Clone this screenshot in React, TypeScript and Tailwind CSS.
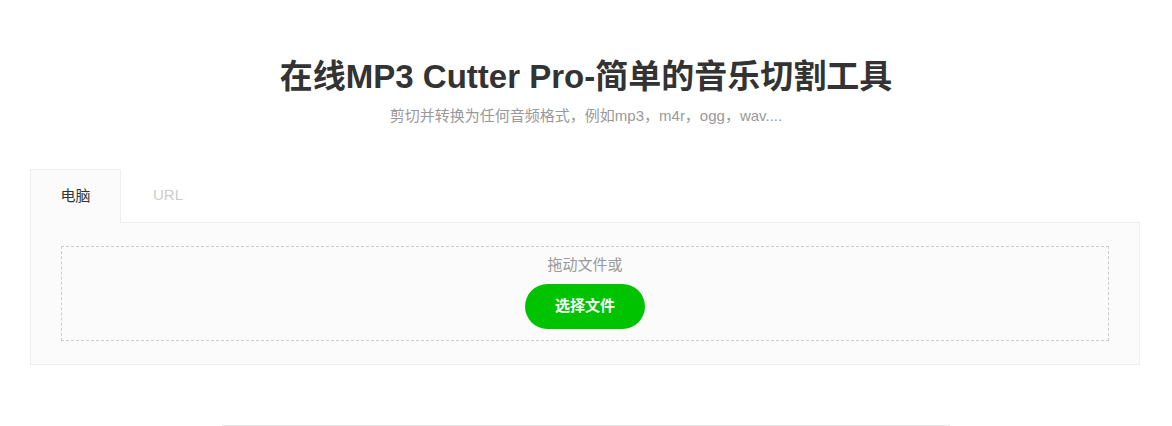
export default function App() {
  return (
    <div
      className="w-full h-[426px] overflow-hidden bg-white"
      style={{ fontFamily: '"Liberation Sans", "Noto Sans CJK SC", sans-serif' }}
    >
      {/* Header */}
      <div className="pt-[57px] text-center">
        <h1 className="text-[33px] leading-[40px] font-bold text-[#333]">
          在线MP3 Cutter Pro-简单的音乐切割工具
        </h1>
        <p className="mt-[9px] text-[15px] leading-[20px] text-[#999]">
          剪切并转换为任何音频格式，例如mp3，m4r，ogg，wav....
        </p>
      </div>

      {/* Upload panel */}
      <div className="mt-[43px] ml-[30px] w-[1110px]">
        <div className="flex">
          <button className="relative z-10 -mb-px w-[91px] h-[54px] border border-b-0 border-[#eee] bg-[#fbfbfb] text-[15px] text-[#333]">
            电脑
          </button>
          <button className="w-[94px] h-[53px] text-[15px] text-[#ccc]">URL</button>
        </div>
        <div className="border border-[#eee] bg-[#fbfbfb] pt-[23px] pb-[23px] px-[30px]">
          <div className="border border-dashed border-[#ccc] pt-[8px] pb-[11px] flex flex-col items-center">
            <p className="text-[15px] leading-[20px] text-[#999]">拖动文件或</p>
            <button className="mt-[9px] w-[120px] h-[45px] rounded-full bg-[#00c300] text-white text-[15px] font-bold">
              选择文件
            </button>
          </div>
        </div>
      </div>

      <div className="mt-[60px] mx-auto w-[728px] h-px bg-[#e5e5e5]" />
    </div>
  )
}
